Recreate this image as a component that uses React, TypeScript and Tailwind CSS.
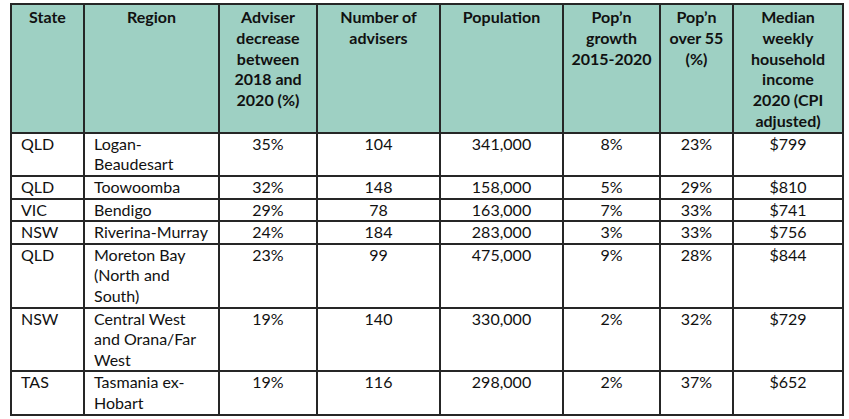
import React from 'react';

type Row = {
  state: string;
  region: string[];
  decrease: string;
  advisers: string;
  population: string;
  growth: string;
  over55: string;
  income: string;
};

const rows: Row[] = [
  { state: 'QLD', region: ['Logan-', 'Beaudesart'], decrease: '35%', advisers: '104', population: '341,000', growth: '8%', over55: '23%', income: '$799' },
  { state: 'QLD', region: ['Toowoomba'], decrease: '32%', advisers: '148', population: '158,000', growth: '5%', over55: '29%', income: '$810' },
  { state: 'VIC', region: ['Bendigo'], decrease: '29%', advisers: '78', population: '163,000', growth: '7%', over55: '33%', income: '$741' },
  { state: 'NSW', region: ['Riverina-Murray'], decrease: '24%', advisers: '184', population: '283,000', growth: '3%', over55: '33%', income: '$756' },
  { state: 'QLD', region: ['Moreton Bay', '(North and', 'South)'], decrease: '23%', advisers: '99', population: '475,000', growth: '9%', over55: '28%', income: '$844' },
  { state: 'NSW', region: ['Central West', 'and Orana/Far', 'West'], decrease: '19%', advisers: '140', population: '330,000', growth: '2%', over55: '32%', income: '$729' },
  { state: 'TAS', region: ['Tasmania ex-', 'Hobart'], decrease: '19%', advisers: '116', population: '298,000', growth: '2%', over55: '37%', income: '$652' },
];

const headers: string[][] = [
  ['State'],
  ['Region'],
  ['Adviser', 'decrease', 'between', '2018 and', '2020 (%)'],
  ['Number of', 'advisers'],
  ['Population'],
  ['Pop\u2019n', 'growth', '2015-2020'],
  ['Pop\u2019n', 'over 55', '(%)'],
  ['Median', 'weekly', 'household', 'income', '2020 (CPI', 'adjusted)'],
];

const widths = ['w-[73px]', 'w-[135px]', 'w-[98px]', 'w-[123px]', 'w-[123px]', 'w-[97px]', 'w-[73px]', 'w-[110px]'];

function Lines({ lines }: { lines: string[] }) {
  return (
    <>
      {lines.map((l, i) => (
        <div key={i} className="whitespace-nowrap">{l}</div>
      ))}
    </>
  );
}

export default function App() {
  const cell = 'border-2 border-[#262626] align-top px-0 py-0';

  return (
    <div className="w-[849px] h-[419px] bg-white overflow-hidden pt-[3px] pl-[10px] font-['Lato',_'Liberation_Sans',_sans-serif] text-[16px] leading-[20.6px] text-[#111111]">
      <table className="table-fixed border-collapse w-[834px]">
        <colgroup>
          {widths.map((w, i) => (
            <col key={i} className={w} />
          ))}
        </colgroup>
        <thead>
          <tr className="bg-[#9ed0c3]">
            {headers.map((h, i) => (
              <th key={i} className={`${cell} font-bold text-center h-[124px] pt-[2px] leading-[20.8px]`}>
                <Lines lines={h} />
              </th>
            ))}
          </tr>
        </thead>
        <tbody>
          {rows.map((r, i) => (
            <tr key={i}>
              <td className={`${cell} text-left pl-[9px]`}>{r.state}</td>
              <td className={`${cell} text-left pl-[9px]`}>
                <Lines lines={r.region} />
              </td>
              <td className={`${cell} text-center`}>{r.decrease}</td>
              <td className={`${cell} text-center`}>{r.advisers}</td>
              <td className={`${cell} text-center`}>{r.population}</td>
              <td className={`${cell} text-center`}>{r.growth}</td>
              <td className={`${cell} text-center`}>{r.over55}</td>
              <td className={`${cell} text-center`}>{r.income}</td>
            </tr>
          ))}
        </tbody>
      </table>
    </div>
  );
}
